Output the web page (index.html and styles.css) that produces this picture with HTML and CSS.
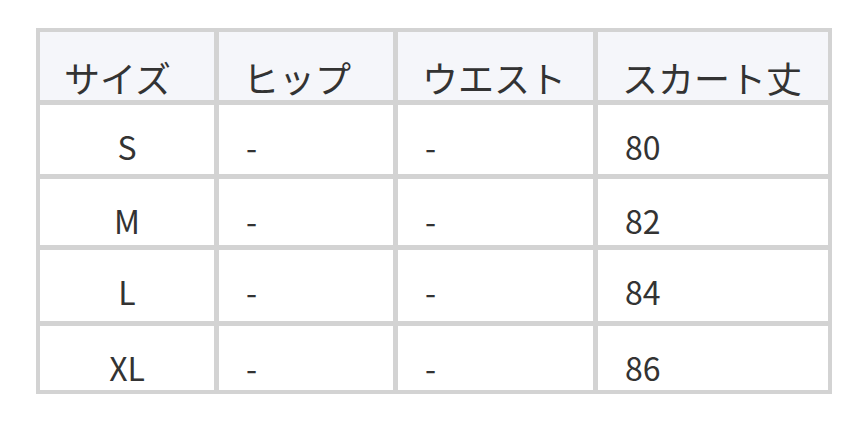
FILE: index.html
```html
<!DOCTYPE html>
<html lang="ja">
<head>
<meta charset="utf-8">
<link rel="stylesheet" href="styles.css">
</head>
<body>
<div class="page">
  <div class="size-table">
    <div class="cell head">サイズ</div>
    <div class="cell head">ヒップ</div>
    <div class="cell head">ウエスト</div>
    <div class="cell head">スカート丈</div>

    <div class="cell center">S</div>
    <div class="cell">-</div>
    <div class="cell">-</div>
    <div class="cell">80</div>

    <div class="cell center">M</div>
    <div class="cell">-</div>
    <div class="cell">-</div>
    <div class="cell">82</div>

    <div class="cell center">L</div>
    <div class="cell">-</div>
    <div class="cell">-</div>
    <div class="cell">84</div>

    <div class="cell center">XL</div>
    <div class="cell">-</div>
    <div class="cell">-</div>
    <div class="cell">86</div>
  </div>
</div>
</body>
</html>
```

FILE: styles.css
```css
html, body {
  margin: 0;
  padding: 0;
  background: #ffffff;
}

.page {
  padding: 28px 36px;
}

.size-table {
  display: grid;
  width: 796px;
  box-sizing: border-box;
  grid-template-columns: 174px 174px 195px 230px;
  grid-template-rows: 68px 69px 66px 71px 64px;
  column-gap: 5px;
  row-gap: 5px;
  padding: 4px;
  background: #d3d3d3;
  font-family: "Noto Sans CJK JP", "Noto Sans", sans-serif;
  font-size: 32px;
  color: #333333;
}

.cell {
  background: #ffffff;
  display: flex;
  align-items: flex-start;
  justify-content: flex-start;
  padding: 22px 0 0 27px;
  line-height: 1.2;
  box-sizing: border-box;
}

.head {
  background: #f5f6fa;
  align-items: flex-end;
  padding: 0 0 1px 24px;
  font-size: 36px;
}

.center {
  justify-content: center;
  padding-left: 0;
}
```
